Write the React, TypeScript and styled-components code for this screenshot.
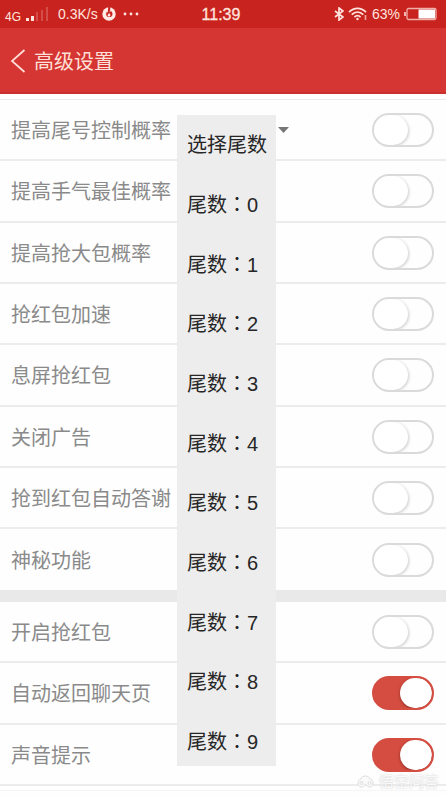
import React, { useState } from "react";
import styled, { createGlobalStyle } from "styled-components";

const GlobalStyle = createGlobalStyle`
  * { box-sizing: border-box; }
  body {
    margin: 0;
    background: #fefefe;
    font-family: "Liberation Sans", "Noto Sans CJK SC", sans-serif;
  }
  button { font: inherit; color: inherit; border: 0; padding: 0; background: none; cursor: pointer; }
`;

const Screen = styled.div`
  position: relative;
  min-height: 100vh;
  overflow: hidden;
  background: #fefefe;
`;

const StatusBar = styled.div`
  display: grid;
  grid-template-columns: 1fr auto 1fr;
  align-items: center;
  height: 28px;
  padding: 0 9px 0 5px;
  background: #c9231f;
  color: #ffe4de;
  font-size: 14px;
`;

const StatusGroup = styled.div<{ $end?: boolean }>`
  display: flex;
  align-items: center;
  justify-content: ${(p) => (p.$end ? "flex-end" : "flex-start")};
  gap: 4px;
  white-space: nowrap;
  svg { display: block; flex: none; }
`;

const Network = styled.span`
  font-size: 12px;
  padding-top: 6px;
`;

const Speed = styled.span`
  margin-left: 5px;
`;

const Clock = styled.time`
  padding-top: 2px;
  font-size: 16px;
  line-height: 26px;
  -webkit-text-stroke: 0.3px currentColor;
`;

const Header = styled.header`
  display: flex;
  align-items: center;
  gap: 8px;
  height: 66px;
  padding: 2px 10px 0;
  background: #d53533;
  border-bottom: 2px solid #c9312e;
  color: #ffe0d8;
`;

const BackButton = styled.button`
  display: flex;
  svg { display: block; }
`;

const Title = styled.h1`
  margin: 0;
  padding-top: 2px;
  font-size: 20px;
  line-height: 28px;
  font-weight: 400;
`;

const Group = styled.section<{ $first?: boolean }>`
  margin-top: ${(p) => (p.$first ? "5px" : "0")};
  border-top: ${(p) => (p.$first ? "1px solid #ebebeb" : "12px solid #e9e9e9")};
  &:last-child {
    padding-bottom: 4px;
    border-bottom: 1px solid #f5f5f5;
  }
`;

const Row = styled.div`
  display: flex;
  align-items: center;
  height: 61px;
  padding: 0 12px 0 11px;
  border-bottom: 2px solid #ececec;
  &:nth-child(3n + 2) { height: 62px; }
  ${Group}:first-of-type &:last-child { height: 61px; border-bottom: 0; }
`;

const Label = styled.label`
  padding-top: 2px;
  font-size: 20px;
  line-height: 28px;
  color: #8a8a8a;
  white-space: nowrap;
`;

const Switch = styled.input`
  appearance: none;
  flex: none;
  width: 62px;
  height: 34px;
  margin: 0 0 0 auto;
  border: 2px solid #dcdad9;
  border-radius: 17px;
  background: #fefefe;
  overflow: hidden;
  cursor: pointer;

  &::before {
    content: "";
    display: block;
    width: 34px;
    height: 30px;
    border-radius: 15px 17px 17px 15px;
    background: #fff;
    box-shadow: 1px 1px 3px #ccc;
  }

  &:checked {
    border-color: #d44d40;
    background: #d44d40;
  }

  &:checked::before {
    width: 32px;
    margin-left: 26px;
    border-radius: 16px;
    box-shadow: 0 1px 3px #8a2a22;
  }
`;

const Picker = styled.div`
  position: relative;
  height: 30px;
  width: 112px;
  margin-left: 6px;
`;

const PickerButton = styled.button`
  display: flex;
  align-items: center;
  justify-content: flex-end;
  width: 100%;
  height: 30px;
`;

const Options = styled.div`
  position: absolute;
  z-index: 2;
  top: 0;
  left: 0;
  width: 99px;
  background: #ededed;
`;

const Option = styled.button`
  display: block;
  width: 100%;
  height: 60px;
  padding-left: 10px;
  text-align: left;
  font-size: 20px;
  line-height: 28px;
  color: #262626;
  white-space: nowrap;
  &:nth-child(3n) { height: 59px; }
  &:last-child { height: 54px; padding-top: 6px; }
`;

const Colon = styled.span`
  font-family: "Noto Sans CJK TC", sans-serif;
`;

const Watermark = styled.div`
  position: absolute;
  right: 7px;
  bottom: 4px;
  display: flex;
  align-items: center;
  gap: 5px;
  font-size: 15px;
  line-height: 20px;
  color: #fafafa;
  text-shadow: 0 0 2px #c4c4c4;
  pointer-events: none;
`;

const mainSettings = [
  "提高尾号控制概率",
  "提高手气最佳概率",
  "提高抢大包概率",
  "抢红包加速",
  "息屏抢红包",
  "关闭广告",
  "抢到红包自动答谢",
  "神秘功能",
];
const otherSettings = ["开启抢红包", "自动返回聊天页", "声音提示"];

const SignalIcon = () => (
  <svg width="24" height="16" viewBox="0 0 24 16" fill="#ffe4de">
    <path d="M1 12h3v3H1zM6 10h3v5H6z" />
    <path d="M11 6h2v9h-2zM16 4h2v11h-2zM21 1h2v14h-2z" opacity=".22" />
  </svg>
);

const FlameIcon = () => (
  <svg width="14" height="14" viewBox="0 0 14 14">
    <circle cx="7" cy="7" r="6.7" fill="#ffeae5" />
    <path d="M8.200 0C8.800 2.500 7.400 3.800 7.700 5.200c.7-.2 1-.9.9-1.700 1.700 1.500 2.300 3 1.700 4.700-.5 1.300-1.600 1.900-3 1.900-1.700 0-2.900-.8-3.100-2.400-.2-1.400.3-2.500 1.200-3.500 0 .9.100 1.300.5 1.700C6 4 6 1.800 6.200 0z" fill="#c9231f" />
    <path d="M7.100 5.800c.2 1.200 1.500 1.500 1.300 2.700-.4 1.500-2.600 1.400-2.800.1-.1-1 1.200-1.500 1.500-2.800z" fill="#ffeae5" />
  </svg>
);

const MoreIcon = () => (
  <svg width="20" height="4" viewBox="0 0 20 4" fill="#ffe4de">
    <circle cx="5" cy="2" r="1.4" />
    <circle cx="11" cy="2" r="1.4" />
    <circle cx="17" cy="2" r="1.4" />
  </svg>
);

const BluetoothIcon = () => (
  <svg width="10" height="14" viewBox="0 0 10 14" fill="none" stroke="#ffe4de" strokeWidth="1.7">
    <path d="M1 4l8 6-4 3V1l4 3-8 6" />
  </svg>
);

const WifiIcon = () => (
  <svg width="20" height="14" viewBox="0 0 20 14" fill="none" stroke="#ffe4de" strokeWidth="1.7">
    <path d="M1 5.2c5-5 12-5 17 0M3.7 7.7c3.5-3.4 8.1-3.4 11.6 0M6.4 10.1c2-1.8 4.2-1.8 6.2 0" />
    <circle cx="9.5" cy="12" r="1.2" fill="#ffe4de" stroke="none" />
    <path d="M17.5 8v5" opacity=".65" />
  </svg>
);

const BatteryIcon = () => (
  <svg width="33" height="14" viewBox="0 0 33 14">
    <path d="M1 5v4" stroke="#ffe4de" strokeWidth="1.5" />
    <rect x="3" y="1.500" width="29" height="11" rx="1.500" fill="none" stroke="#efb0a8" strokeWidth="1.3" />
    <path d="M14.500 2.500H31v9H14.500z" fill="#fff" />
  </svg>
);

type SettingRowProps = {
  id: string;
  name: string;
  on?: boolean;
  children?: React.ReactNode;
};

function SettingRow({ id, name, on = false, children }: SettingRowProps) {
  return (
    <Row>
      <Label htmlFor={id}>{name}</Label>
      {children}
      <Switch id={id} type="checkbox" role="switch" defaultChecked={on} />
    </Row>
  );
}

function TailPicker() {
  const [open, setOpen] = useState(true);
  const close = () => setOpen(false);
  return (
    <Picker>
      <PickerButton
        type="button"
        aria-label="选择尾数"
        aria-haspopup="listbox"
        aria-expanded={open}
        onClick={() => setOpen(!open)}
      >
        <svg width="11" height="6" viewBox="0 0 11 6">
          <path d="M0 0h11L5.500 6z" fill="#777" />
        </svg>
      </PickerButton>
      {open && (
        <Options role="listbox" aria-label="选择尾数">
          <Option type="button" role="option" onClick={close}>
            选择尾数
          </Option>
          {Array.from({ length: 10 }, (_, n) => (
            <Option key={n} type="button" role="option" onClick={close}>
              尾数<Colon>：</Colon>{n}
            </Option>
          ))}
        </Options>
      )}
    </Picker>
  );
}

export default function App() {
  return (
    <Screen>
      <GlobalStyle />
      <StatusBar>
        <StatusGroup>
          <Network>4G</Network>
          <SignalIcon />
          <Speed>0.3K/s</Speed>
          <FlameIcon />
          <MoreIcon />
        </StatusGroup>
        <Clock>11:39</Clock>
        <StatusGroup $end>
          <BluetoothIcon />
          <WifiIcon />
          <span>63%</span>
          <BatteryIcon />
        </StatusGroup>
      </StatusBar>
      <Header>
        <BackButton type="button" aria-label="返回">
          <svg width="16" height="26" viewBox="0 0 16 26" fill="none" stroke="currentColor" strokeWidth="1.7">
            <path d="M14.500 2L2 13l12.500 11" />
          </svg>
        </BackButton>
        <Title>高级设置</Title>
      </Header>
      <main>
        <Group $first>
          {mainSettings.map((name, i) => (
            <SettingRow key={name} id={`main-${i}`} name={name}>
              {i === 0 && <TailPicker />}
            </SettingRow>
          ))}
        </Group>
        <Group>
          {otherSettings.map((name, i) => (
            <SettingRow key={name} id={`other-${i}`} name={name} on={i > 0} />
          ))}
        </Group>
      </main>
      <Watermark>
        <svg width="17" height="14" viewBox="0 0 17 14" fill="#fafafa" stroke="#dedede">
          <path d="M4 4c1-4 8-4 9 0 4 0 4 8 0 8-2 0-3-1-4.500-3C7 11 6 12 4 12 0 12 0 4 4 4z" />
          <circle cx="4.500" cy="8" r="1.500" />
          <circle cx="12.500" cy="8" r="1.500" />
        </svg>
        悟空问答
      </Watermark>
    </Screen>
  );
}
